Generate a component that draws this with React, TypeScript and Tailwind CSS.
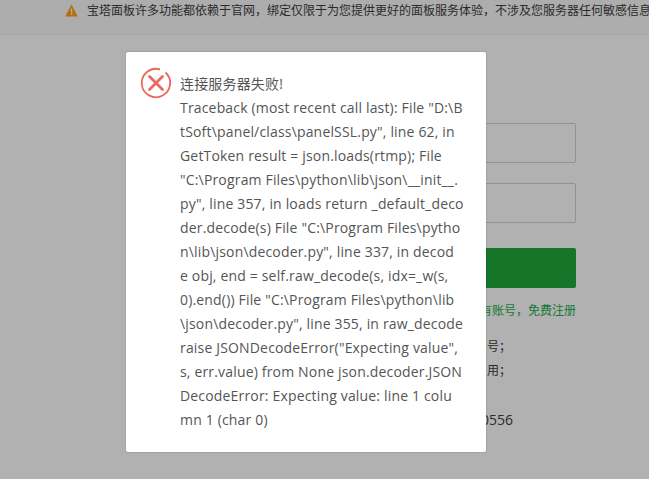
import React from "react";

const font = { fontFamily: '"Open Sans", "Noto Sans CJK SC", sans-serif' };

const lines = [
  "连接服务器失败!",
  'Traceback (most recent call last): File "D:\\B',
  'tSoft\\panel/class\\panelSSL.py", line 62, in',
  "GetToken result = json.loads(rtmp); File",
  '"C:\\Program Files\\python\\lib\\json\\__init__.',
  'py", line 357, in loads return _default_deco',
  'der.decode(s) File "C:\\Program Files\\pytho',
  'n\\lib\\json\\decoder.py", line 337, in decod',
  "e obj, end = self.raw_decode(s, idx=_w(s,",
  '0).end()) File "C:\\Program Files\\python\\lib',
  '\\json\\decoder.py", line 355, in raw_decode',
  'raise JSONDecodeError("Expecting value",',
  "s, err.value) from None json.decoder.JSON",
  "DecodeError: Expecting value: line 1 colu",
  "mn 1 (char 0)",
];

const ErrorIcon = () => (
  <svg width="32" height="32" viewBox="0 0 32 32" fill="none" className="shrink-0">
    <path d="M20 2.4 A14.2 14.2 0 1 0 25.5 5.5" stroke="#e8685f" strokeWidth="1.8" />
    <path d="M9.5 9.5 L22.5 22.5 M22.5 9.5 L9.5 22.5" stroke="#e8685f" strokeWidth="2.8" strokeLinecap="round" />
  </svg>
);

export default function App() {
  return (
    <div className="relative h-[479px] w-[649px] overflow-hidden bg-[#b1b1b1] text-[#2a2a2a]" style={font}>
      {/* top notice */}
      <div className="flex h-[35px] items-start gap-[9px] overflow-hidden whitespace-nowrap border-b border-[#a6a6a6] bg-[#adadad] pl-[65px] pt-[2px] text-[12px] leading-[18px]">
        <svg width="13" height="13" viewBox="0 0 13 13" className="mt-[2px] shrink-0">
          <path d="M6.5 0.5 L12.8 12.5 H0.2 Z" fill="#b3700f" />
          <rect x="5.8" y="4.5" width="1.4" height="4" fill="#b1b1b1" />
          <rect x="5.8" y="9.4" width="1.4" height="1.5" fill="#b1b1b1" />
        </svg>
        <span>宝塔面板许多功能都依赖于官网，绑定仅限于为您提供更好的面板服务体验，不涉及您服务器任何敏感信息</span>
      </div>

      {/* login form behind the mask */}
      <div className="ml-[236px] flex w-[340px] flex-col pt-[88px]">
        <div className="h-[40px] rounded-[2px] border border-[#929292]" />
        <div className="mt-[20px] h-[40px] rounded-[2px] border border-[#929292]" />
        <div className="mt-[25px] h-[40px] rounded-[2px] bg-[#17752a]" />
        <div className="mt-[13px] text-right text-[12px] leading-[20px] text-[#0f7a30]">有账号，免费注册</div>
        <div className="mt-[14px] pl-[251px] text-[12px] leading-[24px]">
          <div>号；</div>
          <div>用；</div>
          <div className="ml-[-6px] mt-[25px] whitespace-nowrap text-[14px]">0556</div>
        </div>
      </div>

      {/* error dialog */}
      <div className="absolute left-[126px] top-[52px] flex h-[400px] w-[360px] gap-[8px] rounded-[2px] bg-white pl-[14px] pt-[15px] shadow-[0_0_2px_rgba(0,0,0,0.25)]">
        <ErrorIcon />
        <div className="whitespace-pre pt-[5px] text-[14px] leading-[24px] tracking-[0.17px] text-[#555555]">
          {lines.map((l, i) => (
            <div key={i}>{l}</div>
          ))}
        </div>
      </div>
    </div>
  );
}
